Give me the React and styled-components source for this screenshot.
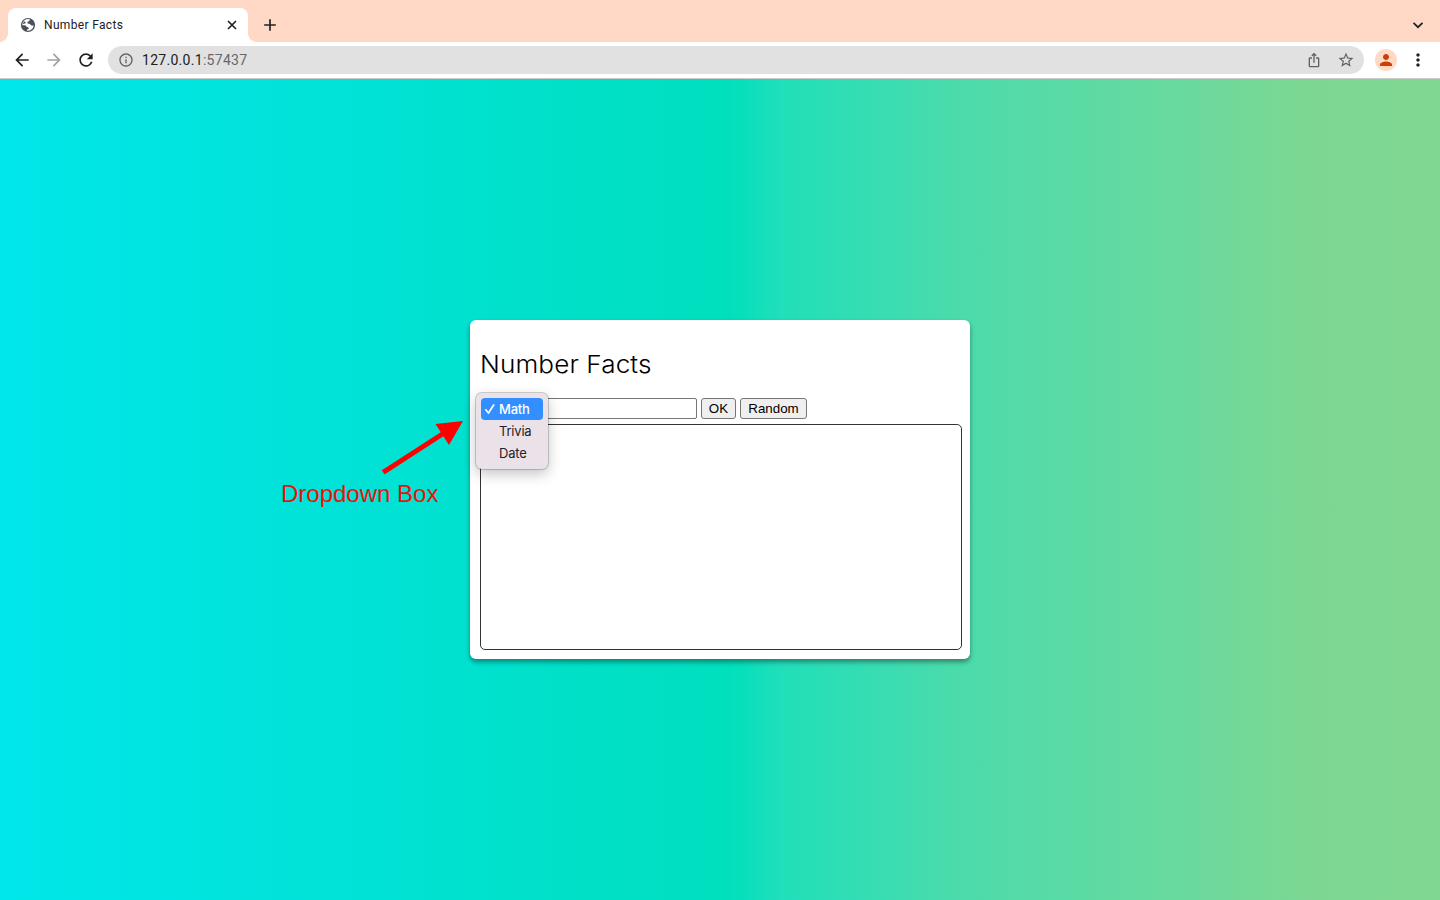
import React from "react";
import styled, { createGlobalStyle } from "styled-components";
import {
  MdArrowBack,
  MdArrowForward,
  MdRefresh,
  MdInfoOutline,
  MdStarBorder,
  MdPerson,
  MdMoreVert,
  MdAdd,
  MdIosShare,
} from "react-icons/md";

const GlobalStyle = createGlobalStyle`
  * { box-sizing: border-box; }
  body { margin: 0; overflow: hidden; font-family: Inter, sans-serif; }
`;

const Browser = styled.div`
  display: flex;
  flex-direction: column;
  width: 1440px;
  height: 900px;
`;

const TabStrip = styled.header`
  display: flex;
  flex: none;
  align-items: flex-end;
  height: 42px;
  padding: 0 10px 0 8px;
  background: #ffd9c6;
`;

const Tab = styled.div`
  position: relative;
  display: flex;
  align-items: center;
  width: 240px;
  height: 34px;
  padding: 0 11px 0 12px;
  border-radius: 8px 8px 0 0;
  background: #fff;

  &::before,
  &::after {
    content: "";
    position: absolute;
    bottom: 0;
    width: 8px;
    height: 8px;
  }
  &::before {
    left: -8px;
    background: radial-gradient(circle at 0 0, transparent 7.5px, #fff 8px);
  }
  &::after {
    right: -8px;
    background: radial-gradient(circle at 100% 0, transparent 7.5px, #fff 8px);
  }
`;

const TabTitle = styled.span`
  flex: 1;
  margin-left: 8px;
  font: 400 12px/16px Roboto, sans-serif;
  letter-spacing: 0.33px;
  color: #202124;
`;

const StripButton = styled.span`
  display: flex;
  align-items: center;
  justify-content: center;
  height: 34px;
  width: ${(p) => p.$width}px;
  margin-left: ${(p) => p.$left};
  color: #202124;
`;

const Toolbar = styled.nav`
  display: flex;
  flex: none;
  align-items: center;
  height: 37px;
  padding: 0 12px;
  background: #fff;
  border-bottom: 1px solid #c9cccb;
`;

const NavIcon = styled.span`
  display: flex;
  flex: none;
  width: 20px;
  margin-right: 12px;
  color: ${(p) => (p.$muted ? "#a2a2a3" : "#202124")};
`;

const AddressBar = styled.div`
  display: flex;
  flex: none;
  align-items: center;
  width: 1256px;
  height: 28px;
  padding: 0 9px 0 10px;
  border-radius: 14px;
  background: #e1e1e1;
  color: #5f6368;
`;

const Address = styled.span`
  flex: 1;
  margin-left: 8px;
  font: 400 14px/20px Roboto, sans-serif;
  letter-spacing: 0.29px;
  color: #65686b;

  b {
    font-weight: 400;
    color: #202124;
  }
`;

const Bookmark = styled(MdStarBorder)`
  margin-left: 15px;
`;

const Avatar = styled.span`
  display: flex;
  flex: none;
  align-items: center;
  justify-content: center;
  width: 22px;
  height: 22px;
  margin: 0 11px;
  border-radius: 50%;
  background: #ffd9c6;
  color: #c94000;
`;

const Page = styled.main`
  position: relative;
  display: flex;
  flex: 1;
  align-items: center;
  justify-content: center;
  background: linear-gradient(
    90deg,
    #00e7ea 0,
    #00e2d4 390px,
    #00dfbe 720px,
    #06dfbc 740px,
    #20dfba 780px,
    #34ddb4 860px,
    #4cdbab 960px,
    #65daa0 1150px,
    #7dd793 1310px,
    #80d791 1440px
  );
`;

const Card = styled.section`
  position: relative;
  width: 500px;
  height: 339px;
  padding: 30px 8px 9px 10px;
  border-radius: 6px;
  background: #fff;
  box-shadow: 0 3px 5px rgba(0, 0, 0, 0.4);
`;

const Heading = styled.h1`
  margin: 0;
  height: 48px;
  font: 300 24px/29px Inter, sans-serif;
  letter-spacing: 0.1px;
  white-space: nowrap;
  color: #000;
  transform: scaleX(1.088);
  transform-origin: 0 0;
`;

const Controls = styled.div`
  display: flex;
  gap: 4px;
  padding-left: 64px;
  height: 26px;
`;

const NumberInput = styled.input`
  width: 153px;
  height: 21px;
  margin: 0;
  padding: 1px 2px;
  border: 1px solid #767676;
  border-radius: 2px;
  background: #fff;
`;

const Button = styled.button`
  width: ${(p) => p.$width}px;
  height: 21px;
  margin: 0;
  padding: 0;
  border: 1px solid #767676;
  border-radius: 3px;
  background: #efefef;
  font: 400 13.33px/17px "Liberation Sans", Arial, sans-serif;
  color: #000;
`;

const Output = styled.div`
  width: 482px;
  height: 226px;
  border: 1px solid #333;
  border-radius: 5px;
`;

const Menu = styled.ul`
  position: absolute;
  left: 6px;
  top: 73px;
  width: 72px;
  height: 76px;
  margin: 0;
  padding: 5px;
  border-radius: 6px;
  background: #ebe1e9;
  box-shadow: 0 0 0 1px rgba(0, 0, 0, 0.18), 0 5px 14px rgba(0, 0, 0, 0.24);
  list-style: none;
`;

const MenuItem = styled.li`
  display: flex;
  align-items: center;
  width: 62px;
  height: 22px;
  padding-left: 3px;
  border-radius: 4px;
  background: ${(p) => (p.$selected ? "#338fff" : "transparent")};
  font: ${(p) => (p.$selected ? 500 : 400)} 13px/22px Inter, sans-serif;
  letter-spacing: -0.2px;
  color: ${(p) => (p.$selected ? "#fff" : "#242124")};
`;

const CheckSlot = styled.span`
  display: flex;
  flex: none;
  width: 15px;
`;

const Annotation = styled.div`
  position: absolute;
  left: 281px;
  top: 340px;
  display: flex;
  flex-direction: column;
  color: #e9120c;
  font: 400 24px/28px "Liberation Sans", Arial, sans-serif;
  white-space: nowrap;

  svg {
    margin: 0 0 6px 99px;
  }
`;

const GlobeIcon = () => (
  <svg width="16" height="16" viewBox="0 0 16 16">
    <circle cx="8" cy="8" r="7.1" fill="#4d5057" />
    <path
      d="M9.7 2.2C9.9 3.4 9.5 4.2 8.3 4.4C7.3 4.5 7.2 5.2 7.5 6.1C7.8 7 9.1 6.8 9.9 7.1C10.8 7.5 10.6 8.6 11.6 8.6H13.7A5.8 5.8 0 0 1 7 13.7V12.5C8.2 12.4 8.9 11.8 8.7 10.9C8.5 10 7.5 10.1 6.7 9.7C5.8 9.2 5.9 8.3 4.8 8.2H2.3A5.8 5.8 0 0 1 9.7 2.2Z"
      fill="#fff"
    />
    <path d="M4.1 4.5C5.4 4.3 6 5.3 5.3 6.3C4.8 7 3.7 6.7 2.6 6.5Z" fill="#4d5057" />
  </svg>
);

const CloseIcon = () => (
  <svg width="10" height="10" viewBox="0 0 10 10" stroke="#202124" strokeWidth="1.7">
    <path d="M1 1 9 9M9 1 1 9" />
  </svg>
);

const ChevronIcon = () => (
  <svg width="12" height="12" viewBox="0 0 12 12" fill="none" stroke="#202124" strokeWidth="1.7">
    <path d="M1.5 3.8 6 8.2 10.5 3.8" />
  </svg>
);

const CheckIcon = () => (
  <svg
    width="12"
    height="12"
    viewBox="0 0 12 12"
    fill="none"
    stroke="#fff"
    strokeWidth="1.7"
    strokeLinecap="round"
    strokeLinejoin="round"
  >
    <path d="M1.8 6.8 4.5 10 9.7 2" />
  </svg>
);

const OPTIONS = ["Math", "Trivia", "Date"];

export default function App() {
  return (
    <Browser>
      <GlobalStyle />
      <TabStrip>
        <Tab>
          <GlobeIcon />
          <TabTitle>Number Facts</TabTitle>
          <CloseIcon />
        </Tab>
        <StripButton $width={44} $left="0px">
          <MdAdd size={20} />
        </StripButton>
        <StripButton $width={24} $left="auto">
          <ChevronIcon />
        </StripButton>
      </TabStrip>
      <Toolbar>
        <NavIcon><MdArrowBack size={20} /></NavIcon>
        <NavIcon $muted><MdArrowForward size={20} /></NavIcon>
        <NavIcon><MdRefresh size={20} /></NavIcon>
        <AddressBar>
          <MdInfoOutline size={16} />
          <Address><b>127.0.0.1</b>:57437</Address>
          <MdIosShare size={16} />
          <Bookmark size={18} />
        </AddressBar>
        <Avatar><MdPerson size={18} /></Avatar>
        <MdMoreVert size={20} color="#202124" />
      </Toolbar>
      <Page>
        <Card>
          <Heading>Number Facts</Heading>
          <Controls>
            <NumberInput />
            <Button $width={35}>OK</Button>
            <Button $width={67}>Random</Button>
          </Controls>
          <Output />
          <Menu>
            {OPTIONS.map((name, i) => (
              <MenuItem key={name} $selected={i === 0}>
                <CheckSlot>{i === 0 && <CheckIcon />}</CheckSlot>
                {name}
              </MenuItem>
            ))}
          </Menu>
        </Card>
        <Annotation>
          <svg width="84" height="55" viewBox="380 419 84 55">
            <path d="M383.2 472.3 444 433" stroke="#f00" strokeWidth="5" />
            <path d="M463 421 435.5 424 449 445Z" fill="#f00" />
          </svg>
          Dropdown Box
        </Annotation>
      </Page>
    </Browser>
  );
}
